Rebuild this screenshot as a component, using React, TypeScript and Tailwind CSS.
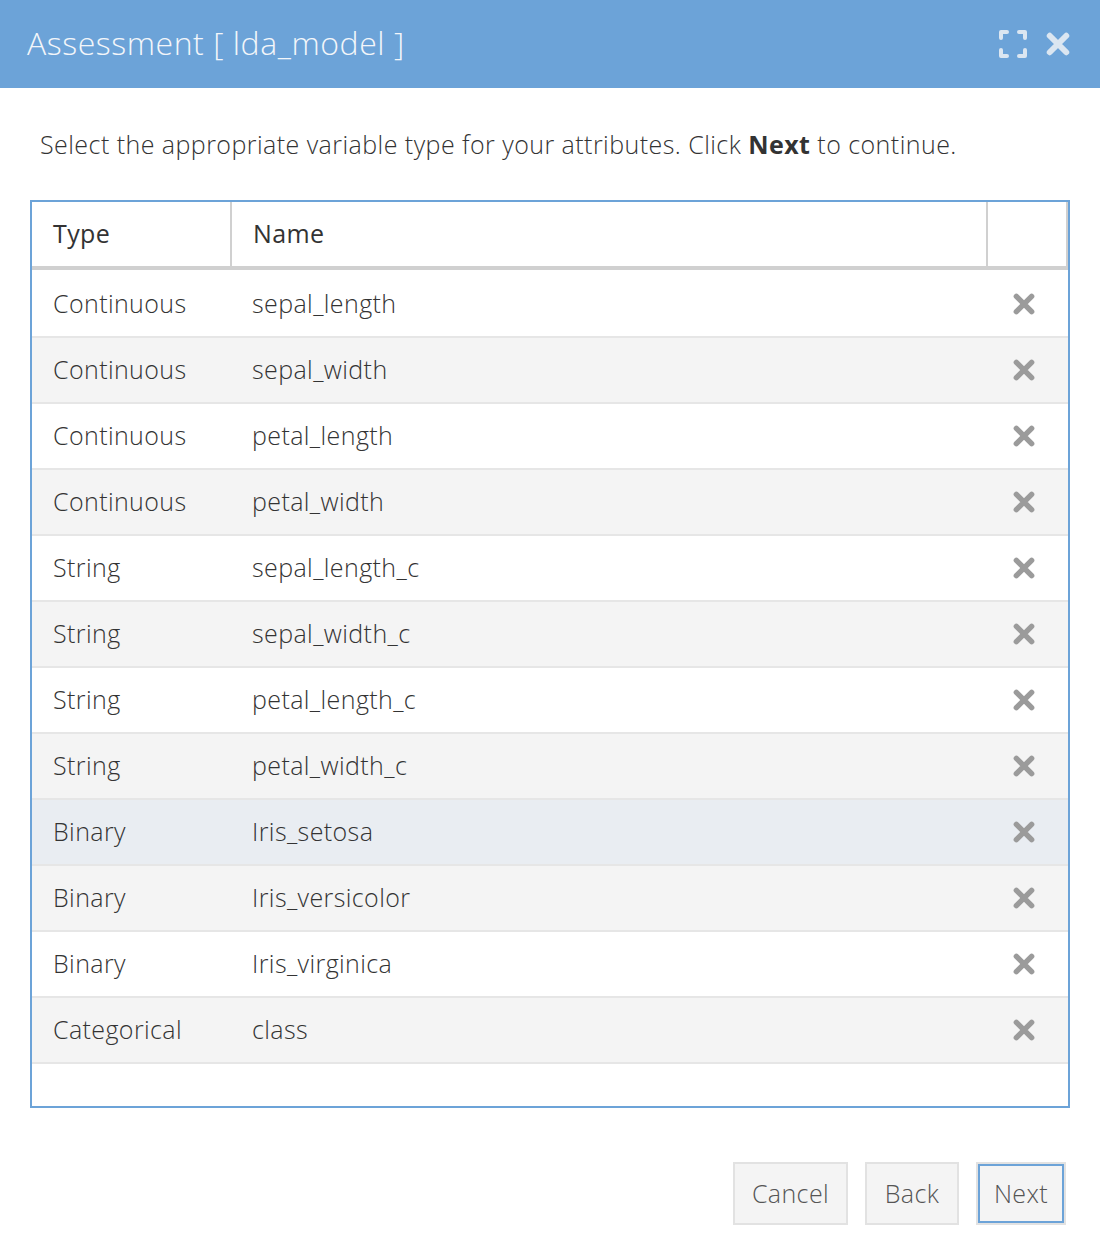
import React from "react";

const rows: [string, string][] = [
  ["Continuous", "sepal_length"],
  ["Continuous", "sepal_width"],
  ["Continuous", "petal_length"],
  ["Continuous", "petal_width"],
  ["String", "sepal_length_c"],
  ["String", "sepal_width_c"],
  ["String", "petal_length_c"],
  ["String", "petal_width_c"],
  ["Binary", "Iris_setosa"],
  ["Binary", "Iris_versicolor"],
  ["Binary", "Iris_virginica"],
  ["Categorical", "class"],
];

function XIcon({ color, size }: { color: string; size: number }) {
  return (
    <svg width={size} height={size} viewBox="0 0 22 22">
      <path d="M4 4 L18 18 M18 4 L4 18" stroke={color} strokeWidth={5} strokeLinecap="round" fill="none" />
    </svg>
  );
}

function ExpandIcon() {
  return (
    <svg width="30" height="30" viewBox="0 0 30 30" fill="none" stroke="#dbe6f1" strokeWidth="4" strokeLinecap="round" strokeLinejoin="round">
      <path d="M3 9 V3 H9" />
      <path d="M21 3 H27 V9" />
      <path d="M27 21 V27 H21" />
      <path d="M9 27 H3 V21" />
    </svg>
  );
}

export default function App() {
  return (
    <div className="w-[1100px] h-[1250px] bg-white flex flex-col" style={{ fontFamily: '"Open Sans", "Noto Sans", sans-serif' }}>
      <div className="h-[88px] bg-[#6ca3d8] flex items-center pl-[27px] pr-[29px]">
        <div className="text-[32px] font-light tracking-[0.55px] text-[#f3f6fa] leading-none pb-[2px]">Assessment [ lda_model ]</div>
        <div className="ml-auto flex items-center gap-[17px]">
          <ExpandIcon />
          <XIcon color="#dbe6f1" size={26} />
        </div>
      </div>
      <div className="pl-[40px] pt-[40px] text-[25px] tracking-[0.45px] font-light text-[#333] leading-[32px]">
        Select the appropriate variable type for your attributes. Click <span className="font-bold">Next</span> to continue.
      </div>
      <div className="ml-[30px] mt-[40px] w-[1040px] h-[908px] border-2 border-[#6ca3d8] flex flex-col">
        <div className="flex h-[68px] border-b-4 border-[#d0d0d0] text-[25px] tracking-[0.4px] text-[#333] font-normal">
          <div className="w-[200px] border-r-2 border-[#d0d0d0] flex items-center pl-[21px]">Type</div>
          <div className="w-[756px] border-r-2 border-[#d0d0d0] flex items-center pl-[21px]">Name</div>
          <div className="w-[80px] border-r-2 border-[#d0d0d0]"></div>
        </div>
        <div className="pt-[2px] flex flex-col">
          {rows.map(([t, n], i) => {
            const bg = i === 8 ? "bg-[#e9edf2]" : i % 2 === 1 ? "bg-[#f4f4f4]" : "bg-white";
            return (
              <div key={i} className={`flex h-[66px] border-b-2 border-[#e6e6e6] ${bg} text-[25px] tracking-[0.4px] font-light text-[#333]`}>
                <div className="w-[200px] flex items-center pl-[21px]">{t}</div>
                <div className="w-[756px] flex items-center pl-[20px]">{n}</div>
                <div className="flex-1 flex items-center pl-[24px]">
                  <XIcon color="#9b9b9b" size={24} />
                </div>
              </div>
            );
          })}
        </div>
      </div>
      <div className="flex justify-end gap-[17px] pr-[34px] mt-[54px]">
        <button className="h-[63px] w-[115px] bg-[#f4f4f4] border-2 border-[#e2e2e2] text-[25px] tracking-[0.4px] font-light text-[#555]">Cancel</button>
        <button className="h-[63px] w-[94px] bg-[#f4f4f4] border-2 border-[#e2e2e2] text-[25px] tracking-[0.4px] font-light text-[#555]">Back</button>
        <button className="h-[63px] w-[90px] bg-[#f4f4f4] border-2 border-[#e2e2e2] shadow-[inset_0_0_0_2px_#6ca3d8] text-[25px] tracking-[0.4px] font-light text-[#555]">Next</button>
      </div>
    </div>
  );
}
